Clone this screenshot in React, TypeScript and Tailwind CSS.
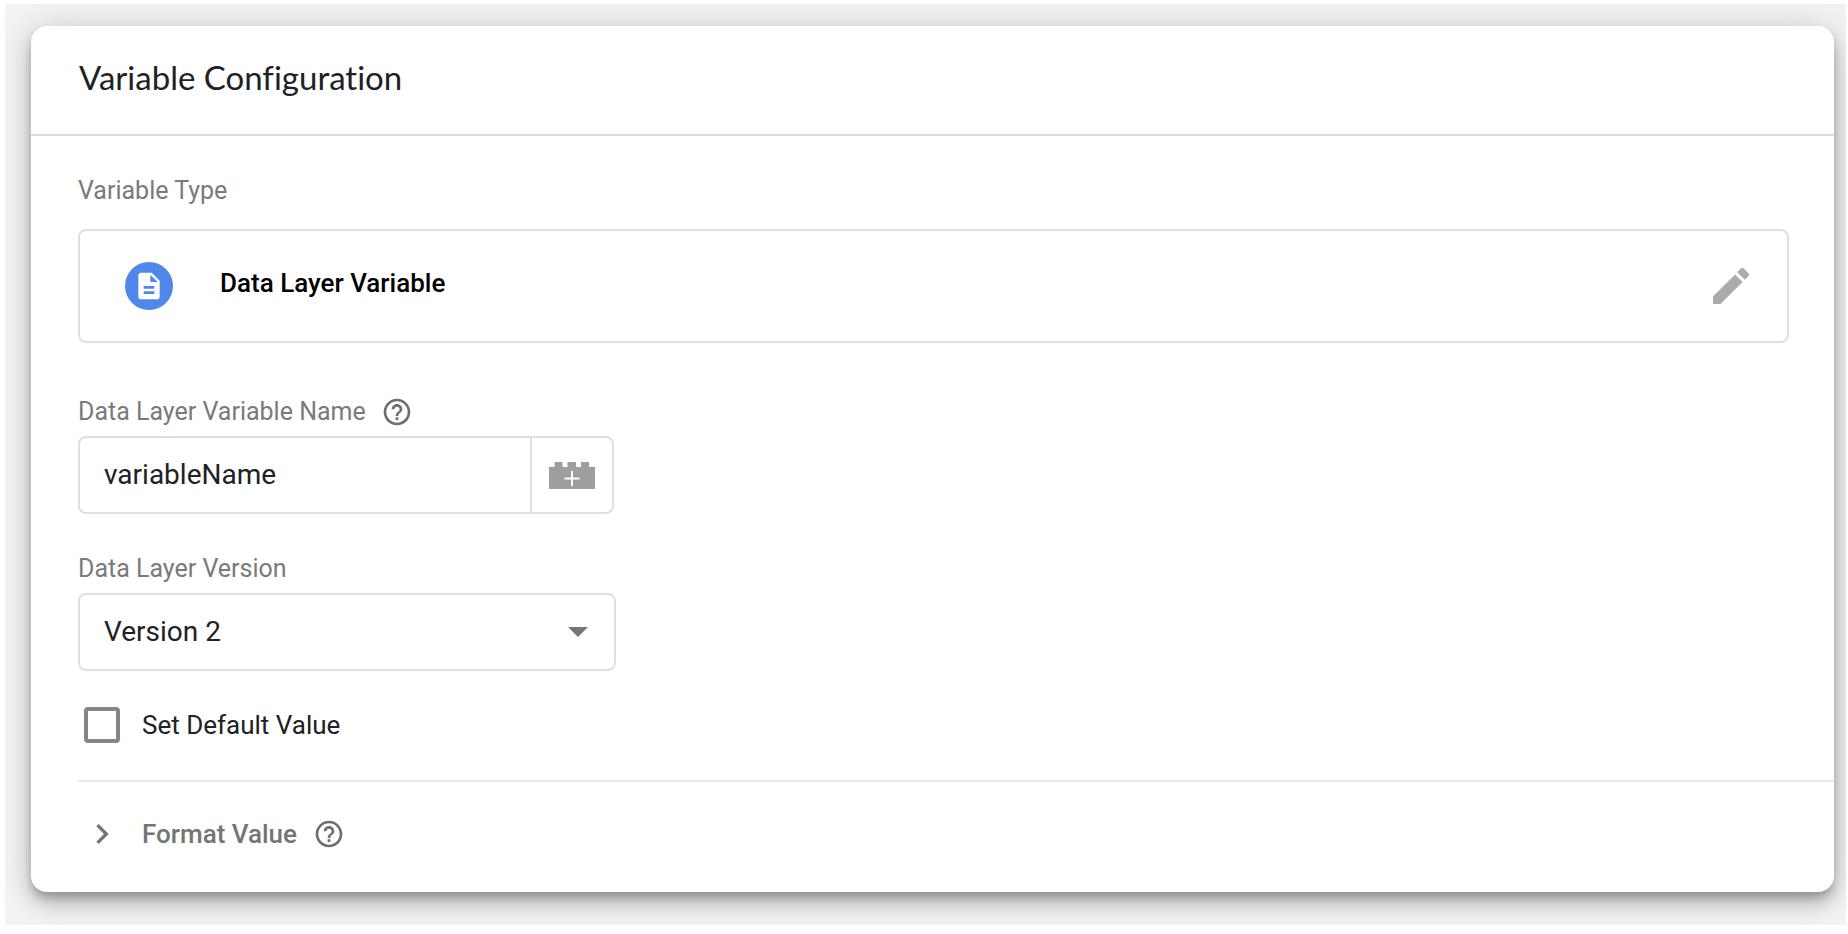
import { useState } from "react";
import type { ReactNode } from "react";
import {
  MdArrowDropDown,
  MdChevronRight,
  MdDescription,
  MdEdit,
  MdHelpOutline,
} from "react-icons/md";

interface FieldLabelProps {
  htmlFor: string;
  children: ReactNode;
}

const FieldLabel = ({ htmlFor, children }: FieldLabelProps) => (
  <label htmlFor={htmlFor} className="text-[25px] leading-8 text-[#7a7a7a]">
    {children}
  </label>
);

const HelpButton = ({ label }: { label: string }) => (
  <button type="button" aria-label={label} className="text-[#6e6e6e]">
    <MdHelpOutline className="size-8" />
  </button>
);

const BrickIcon = () => (
  <svg viewBox="0 0 46 27" className="h-[27px] w-[46px]" aria-hidden="true">
    <path
      fill="#9e9e9e"
      d="M0 27V5h5.500V0h8v5h5V0h8.500v5h5V0h8v5h6v22z"
    />
    <path stroke="#fff" strokeWidth="2" d="M23 9v15M15.500 16.500h15" />
  </svg>
);

export default function App() {
  const [name, setName] = useState("variableName");
  const [version, setVersion] = useState("2");
  const [hasDefault, setHasDefault] = useState(false);

  return (
    <div className="bg-white pt-1 pr-0.5 pb-2 pl-[5px] font-[Roboto,sans-serif] text-[#202124]">
      <main className="overflow-hidden bg-[#f1f3f4] pt-[22px] pr-3 pb-[33px] pl-[26px]">
        <section className="rounded-2xl bg-white shadow-[0_12px_20px_rgba(0,0,0,0.2),0_2px_36px_rgba(0,0,0,0.14),0_6px_10px_-2px_rgba(0,0,0,0.24)]">
          <header className="border-b-2 border-[#dadce0] px-12 pt-[31px] pb-[37px]">
            <h1 className="font-[Lato,sans-serif] text-[33px] leading-10 [font-variant-ligatures:none]">
              Variable Configuration
            </h1>
          </header>

          <div className="pt-[39px] pb-[38px] pl-[47px]">
            <div className="pr-[45px]">
              <h2 className="text-[25px] leading-8 text-[#7a7a7a]">Variable Type</h2>
              <div className="mt-[22px] flex h-[114px] items-center rounded-lg border-2 border-[#dedfe4] pr-8 pl-[45px]">
                <span className="flex size-12 items-center justify-center rounded-full bg-[#4f87ea] text-white">
                  <MdDescription className="size-8" />
                </span>
                <span className="ml-[47px] pb-1.5 text-[26px] font-medium text-black">
                  Data Layer Variable
                </span>
                <button
                  type="button"
                  aria-label="Edit variable type"
                  className="ml-auto text-[#aaaaaa]"
                >
                  <MdEdit className="size-12" />
                </button>
              </div>
            </div>

            <div className="mt-[53px] flex items-center gap-[15px]">
              <FieldLabel htmlFor="variable-name">Data Layer Variable Name</FieldLabel>
              <HelpButton label="About the variable name" />
            </div>
            <div className="mt-2 flex h-[78px] w-[536px] rounded-lg border-2 border-[#dedfe4]">
              <input
                id="variable-name"
                type="text"
                value={name}
                onChange={(e) => setName(e.target.value)}
                className="min-w-0 flex-1 rounded-l-lg px-6 text-[28px] outline-none"
              />
              <button
                type="button"
                aria-label="Insert variable"
                className="flex w-[82px] items-center justify-center border-l-2 border-[#dedfe4]"
              >
                <BrickIcon />
              </button>
            </div>

            <div className="mt-[39px] flex">
              <FieldLabel htmlFor="layer-version">Data Layer Version</FieldLabel>
            </div>
            <div className="relative mt-2 w-[538px]">
              <select
                id="layer-version"
                value={version}
                onChange={(e) => setVersion(e.target.value)}
                className="h-[78px] w-full appearance-none rounded-lg border-2 border-[#dedfe4] bg-white px-6 text-[28px] outline-none"
              >
                <option value="1">Version 1</option>
                <option value="2">Version 2</option>
              </select>
              <MdArrowDropDown className="pointer-events-none absolute top-3.5 right-3.5 size-12 text-[#757575]" />
            </div>

            <div className="mt-9 flex items-center gap-[22px] pl-1.5">
              <input
                id="default-value"
                type="checkbox"
                checked={hasDefault}
                onChange={(e) => setHasDefault(e.target.checked)}
                className="size-9 appearance-none rounded border-4 border-[#80868b] checked:bg-[#80868b]"
              />
              <label htmlFor="default-value" className="text-[26px] leading-8">
                Set Default Value
              </label>
            </div>

            <div className="mt-[37px] border-t-2 border-[#e8eaed] pt-8">
              <div className="flex items-center gap-4 pl-1 text-[#757575]">
                <button
                  type="button"
                  aria-expanded="false"
                  className="flex items-center gap-5 text-[26px] leading-10 font-medium"
                >
                  <MdChevronRight className="size-10" />
                  Format Value
                </button>
                <HelpButton label="About format value" />
              </div>
            </div>
          </div>
        </section>
      </main>
    </div>
  );
}
